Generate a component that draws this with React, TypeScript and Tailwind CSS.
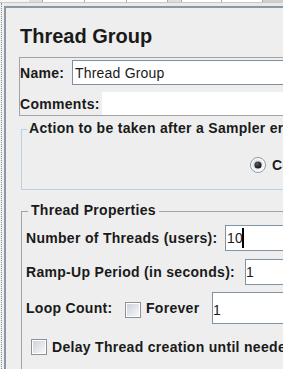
import React from "react";

function Radio() {
  return (
    <svg width="16" height="16" viewBox="0 0 16 16" className="shrink-0">
      <defs>
        <linearGradient id="rgInner" x1="0" y1="0" x2="1" y2="1">
          <stop offset="0" stopColor="#d6dce3" />
          <stop offset="1" stopColor="#f7f8fa" />
        </linearGradient>
        <radialGradient id="rgDot" cx="0.4" cy="0.35" r="0.7">
          <stop offset="0" stopColor="#5a5a5a" />
          <stop offset="1" stopColor="#0d0d0d" />
        </radialGradient>
      </defs>
      <circle cx="8" cy="8" r="7.5" fill="#ffffff" stroke="#8a98a8" />
      <circle cx="8" cy="8" r="5.8" fill="url(#rgInner)" />
      <circle cx="8" cy="8" r="3.6" fill="url(#rgDot)" />
    </svg>
  );
}

function CheckBox() {
  return (
    <div className="w-[16px] h-[16px] shrink-0 border border-[#8e9298] bg-white p-[1px]">
      <div className="w-full h-full bg-gradient-to-br from-[#cdd3da] to-[#f7f8f9]" />
    </div>
  );
}

export default function App() {
  const label = "text-[14px] leading-[16px] font-bold tracking-[0.3px] whitespace-nowrap";
  return (
    <div className="w-[283px] h-[369px] overflow-hidden bg-[#e9e9e9] text-[#1a1a1a] font-['Liberation_Sans',Arial,sans-serif] flex flex-col">
      {/* toolbar bottoms */}
      <div className="h-[3px] flex shrink-0 border-b border-[#c9c9c9]">
        <div className="w-[30px] bg-[#f6f6f6]" />
        <div className="w-[13px] bg-[#dedede]" />
        <div className="w-[43px] bg-white border-x border-[#a8a8a8]" />
        <div className="w-[43px] bg-white border-r border-[#a8a8a8]" />
        <div className="w-[42px] bg-white border-r border-[#a8a8a8]" />
        <div className="w-[13px] bg-[#dedede]" />
        <div className="w-[42px] bg-white border-x border-[#a8a8a8]" />
        <div className="w-[42px] bg-white border-r border-[#a8a8a8]" />
        <div className="w-[20px] bg-[#cfcfcf]" />
      </div>

      <div className="flex flex-1 min-h-0">
        {/* tree edge */}
        <div className="w-[4px] shrink-0 bg-[#f0f0f0]">
          <div className="ml-[1px] h-full w-0 border-l border-dotted border-[#8c8c8c]" />
        </div>

        {/* main panel */}
        <div className="mt-[3px] w-[600px] shrink-0 border-l-2 border-t-2 border-[#8a98a6] bg-[#eeeeee] pl-[13px] pt-[16px]">
          <div className="ml-[1px] text-[20px] leading-[24px] font-bold">Thread Group</div>

          {/* name / comments */}
          <div className="mt-[9px] h-[59px] border border-[#a3a3a3]">
            <div className="mt-[2px] flex items-center h-[25px]">
              <span className={`${label} w-[52px]`}>Name:</span>
              <div className="flex-1 h-[25px] bg-white border border-[#7d8fa3] pl-[2px] flex items-center text-[14px] leading-[16px] tracking-[0.2px]">
                Thread Group
              </div>
            </div>
            <div className="mt-[7px] flex items-center h-[23px]">
              <span className={`${label} w-[82px]`}>Comments:</span>
              <div className="flex-1 h-[23px] bg-white" />
            </div>
          </div>

          {/* action after error */}
          <fieldset className="ml-[2px] mt-[4px] border border-[#b9d1ea] pb-[16px]">
            <legend className={`${label} ml-[5px] px-[2px] pb-[3px]`}>
              Action to be taken after a Sampler error
            </legend>
            <div className="pt-[18px] pl-[228px] flex items-center h-[34px] box-border">
              <Radio />
              <span className={`${label} ml-[6px]`}>Continue</span>
            </div>
          </fieldset>

          {/* thread properties */}
          <fieldset className="ml-[2px] mt-[12px] border border-[#a3a3a3] pb-[40px]">
            <legend className={`${label} ml-[6px] px-[3px] pb-[3px]`}>Thread Properties</legend>
            <div className="pt-[4px] pl-[4px] flex flex-col">
              <div className="flex items-center h-[26px]">
                <span className={`${label} w-[199px]`}>Number of Threads (users):</span>
                <div className="flex-1 h-[26px] bg-white border border-[#8193a6] pl-[1px] flex items-center text-[14px] leading-[16px] tracking-[0.2px]">
                  <span>10</span>
                  <span className="inline-block w-[2px] h-[20px] bg-black ml-[-1px]" />
                </div>
              </div>

              <div className="mt-[8px] flex items-center h-[26px]">
                <span className={`${label} w-[219px]`}>Ramp-Up Period (in seconds):</span>
                <div className="flex-1 h-[26px] bg-white border border-[#8193a6] flex items-center text-[14px] leading-[16px] tracking-[0.2px]">
                  1
                </div>
              </div>

              <div className="mt-[7px] flex items-start h-[32px]">
                <span className={`${label} mt-[8px] w-[99px]`}>Loop Count:</span>
                <div className="mt-[10px]">
                  <CheckBox />
                </div>
                <span className={`${label} mt-[8px] ml-[5px] w-[66px]`}>Forever</span>
                <div className="flex-1 h-[32px] bg-white border border-[#8193a6] pt-[9px] text-[14px] leading-[16px] tracking-[0.2px]">
                  1
                </div>
              </div>

              <div className="mt-[15px] pl-[5px] flex items-center h-[16px]">
                <CheckBox />
                <span className={`${label} ml-[5px]`}>Delay Thread creation until needed</span>
              </div>
            </div>
          </fieldset>
        </div>
      </div>
    </div>
  );
}
